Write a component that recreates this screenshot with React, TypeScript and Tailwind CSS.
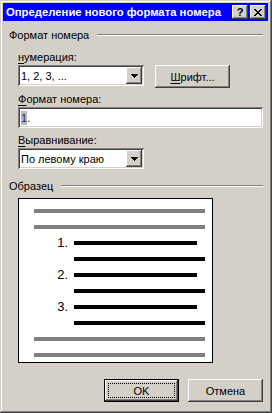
import React from "react";

const raised =
  "shadow-[inset_-1px_-1px_#404040,inset_1px_1px_#ffffff,inset_-2px_-2px_#808080,inset_2px_2px_#d4d0c8]";
const sunken =
  "shadow-[inset_1px_1px_#808080,inset_-1px_-1px_#ffffff,inset_2px_2px_#404040,inset_-2px_-2px_#d4d0c8]";

function Combo({ text, width }: { text: string; width: string }) {
  return (
    <div className={`${width} h-[21px] bg-white ${sunken} flex items-center p-[2px]`}>
      <span className="flex-1 pl-[1px] text-[11px] leading-[14px] whitespace-nowrap">{text}</span>
      <div className={`w-[16px] h-[17px] bg-[#d4d0c8] ${raised} flex items-center justify-center`}>
        <svg width="7" height="4" viewBox="0 0 7 4" shapeRendering="crispEdges">
          <polygon points="0,0 7,0 3.5,4" fill="#000" />
        </svg>
      </div>
    </div>
  );
}

function GroupHeader({ text }: { text: string }) {
  return (
    <div className="flex items-center h-[14px]">
      <span className="text-[11px] leading-[14px] whitespace-nowrap">{text}</span>
      <div className="flex-1 ml-[8px] h-[2px] border-t border-t-[#808080] border-b border-b-white" />
    </div>
  );
}

function U({ children }: { children: React.ReactNode }) {
  return <span className="underline underline-offset-[2px]">{children}</span>;
}

export default function App() {
  const rows: { num?: string; kind: "gray" | "short" | "long" }[] = [
    { kind: "gray" },
    { kind: "gray" },
    { num: "1.", kind: "short" },
    { kind: "long" },
    { num: "2.", kind: "short" },
    { kind: "long" },
    { num: "3.", kind: "short" },
    { kind: "long" },
    { kind: "gray" },
    { kind: "gray" },
  ];
  return (
    <div className="font-['Liberation_Sans',Arial,sans-serif] text-black">
      <div
        className={`w-[272px] h-[413px] bg-[#d4d0c8] pt-[3px] pl-[3px] pr-[4px] pb-[4px] flex flex-col shadow-[inset_-1px_-1px_#404040,inset_1px_1px_#d4d0c8,inset_-2px_-2px_#808080,inset_2px_2px_#ffffff]`}
      >
        {/* Title bar */}
        <div className="h-[18px] bg-[#0000ff] flex items-center pl-[3px] pr-[2px]">
          <span className="flex-1 text-white font-bold text-[11.3px] leading-[14px] whitespace-nowrap overflow-hidden">
            Определение нового формата номера
          </span>
          <div className={`w-[16px] h-[14px] bg-[#d4d0c8] ${raised} flex items-center justify-center`}>
            <span className="font-bold text-[11px] leading-[11px]">?</span>
          </div>
          <div className={`ml-[2px] w-[16px] h-[14px] bg-[#d4d0c8] ${raised} flex items-center justify-center`}>
            <svg width="8" height="7" viewBox="0 0 8 7" shapeRendering="crispEdges">
              <path d="M0 0h2v1H0zM6 0h2v1H6zM1 1h2v1H1zM5 1h2v1H5zM2 2h4v1H2zM3 3h2v1H3zM2 4h4v1H2zM1 5h2v1H1zM5 5h2v1H5zM0 6h2v1H0zM6 6h2v1H6z" fill="#000" />
            </svg>
          </div>
        </div>

        {/* Content */}
        <div className="flex flex-col pl-[6px] pr-[5px]">
          <div className="mt-[7px]">
            <GroupHeader text="Формат номера" />
          </div>
          <div className="pl-[9px] flex flex-col">
            <div className="mt-[8px] h-[14px] text-[11px] leading-[14px]">
              <U>н</U>умерация:
            </div>
            <div className="mt-[1px] flex items-start h-[23px]">
              <Combo text="1, 2, 3, ..." width="w-[126px]" />
              <div className={`ml-[11px] w-[75px] h-[23px] bg-[#d4d0c8] ${raised} flex items-center justify-center text-[11px] leading-[14px]`}>
                <span>
                  <U>Ш</U>рифт...
                </span>
              </div>
            </div>
            <div className="mt-[4px] h-[14px] text-[11px] leading-[14px]">
              <U>Ф</U>ормат номера:
            </div>
            <div className={`mt-[1px] w-[245px] h-[21px] bg-white ${sunken} flex items-center pl-[3px]`}>
              <span className="text-[11px] leading-[14px] bg-[#b8b8b8] text-[#1c2f70]">1</span>
              <span className="text-[11px] leading-[14px]">.</span>
            </div>
            <div className="mt-[5px] h-[14px] text-[11px] leading-[14px]">
              <U>В</U>ыравнивание:
            </div>
            <div className="mt-[1px]">
              <Combo text="По левому краю" width="w-[126px]" />
            </div>
          </div>

          <div className="mt-[10px]">
            <GroupHeader text="Образец" />
          </div>

          <div className="pl-[9px]">
            <div className="mt-[5px] w-[195px] h-[165px] bg-white border border-black pt-[4px] overflow-hidden flex flex-col">
              {rows.map((r, i) => (
                <div key={i} className="h-[16px] flex items-center shrink-0">
                  {r.kind === "gray" ? (
                    <div className="ml-[15px] w-[171px] h-[4px] bg-[#808080]" />
                  ) : (
                    <>
                      <div className="w-[49px] text-right text-[13px] leading-[16px]">{r.num ?? ""}</div>
                      <div
                        className={`ml-[6px] h-[4px] bg-black ${r.kind === "short" ? "w-[123px]" : "w-[131px]"}`}
                      />
                    </>
                  )}
                </div>
              ))}
            </div>
          </div>

          <div className="mt-[16px] flex justify-end gap-[9px]">
            <div className="w-[75px] h-[23px] border border-black bg-[#d4d0c8]">
              <div className={`w-full h-full ${raised} p-[3px]`}>
                <div className="w-full h-full border border-dotted border-black flex items-center justify-center text-[11px] leading-[14px]">
                  OK
                </div>
              </div>
            </div>
            <div className={`w-[75px] h-[23px] bg-[#d4d0c8] ${raised} flex items-center justify-center text-[11px] leading-[14px]`}>
              Отмена
            </div>
          </div>
        </div>
      </div>
    </div>
  );
}
